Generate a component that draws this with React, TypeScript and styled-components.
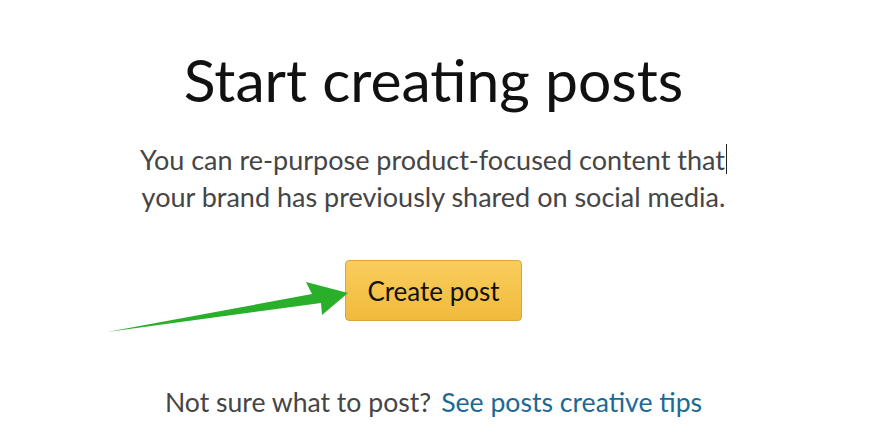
import React from 'react'
import styled, { createGlobalStyle } from 'styled-components'

const GlobalStyle = createGlobalStyle`
    html, body {
        margin: 0;
        padding: 0;
        background: #fff;
    }
    body {
        font-family: Lato, "Noto Sans", sans-serif;
    }
`

const Page = styled.main`
    width: 867px;
    height: 447px;
    display: flex;
    flex-direction: column;
    align-items: center;
    overflow: hidden;
`

const Title = styled.h1`
    margin: 44px 0 0;
    font-size: 58.8px;
    font-weight: 400;
    line-height: 72px;
    color: #111;
`

const Intro = styled.p`
    margin: 25px 0 0;
    font-size: 27px;
    line-height: 37px;
    color: #454545;
    text-align: center;
`

const Caret = styled.span`
    display: inline-block;
    width: 1px;
    height: 30px;
    margin-left: 1px;
    background: #222;
    vertical-align: -4px;
`

const ActionRow = styled.div`
    position: relative;
    margin-top: 45px;
    display: flex;
    justify-content: center;
    width: 100%;
`

const Arrow = styled.svg`
    position: absolute;
    left: 0;
    top: 0;
    pointer-events: none;
`

const CreateButton = styled.button`
    width: 177px;
    height: 61px;
    border: 1px solid #d7a63c;
    border-radius: 4px;
    background: linear-gradient(to bottom, #f8cd5c, #f1ba3c);
    font-family: inherit;
    font-size: 26px;
    color: #111;
    cursor: pointer;
`

const Footer = styled.p`
    margin: 64px 0 0;
    font-size: 26.6px;
    line-height: 34px;
    color: #454545;

    a {
        margin-left: 10px;
        color: #1b6a96;
        text-decoration: none;
    }
`

const App = () => (
    <>
        <GlobalStyle />
        <Page>
            <Title>Start creating posts</Title>
            <Intro>
                You can re-purpose product-focused content that<Caret />
                <br />
                your brand has previously shared on social media.
            </Intro>
            <ActionRow>
                <CreateButton>Create post</CreateButton>
                <Arrow width="360" height="80" viewBox="0 0 360 80">
                    <polygon
                        points="107,72 312,34 306,22 348,33 322,55 321,43"
                        fill="#2aaf2a"
                    />
                </Arrow>
            </ActionRow>
            <Footer>
                Not sure what to post?<a href="#">See posts creative tips</a>
            </Footer>
        </Page>
    </>
)

export default App
